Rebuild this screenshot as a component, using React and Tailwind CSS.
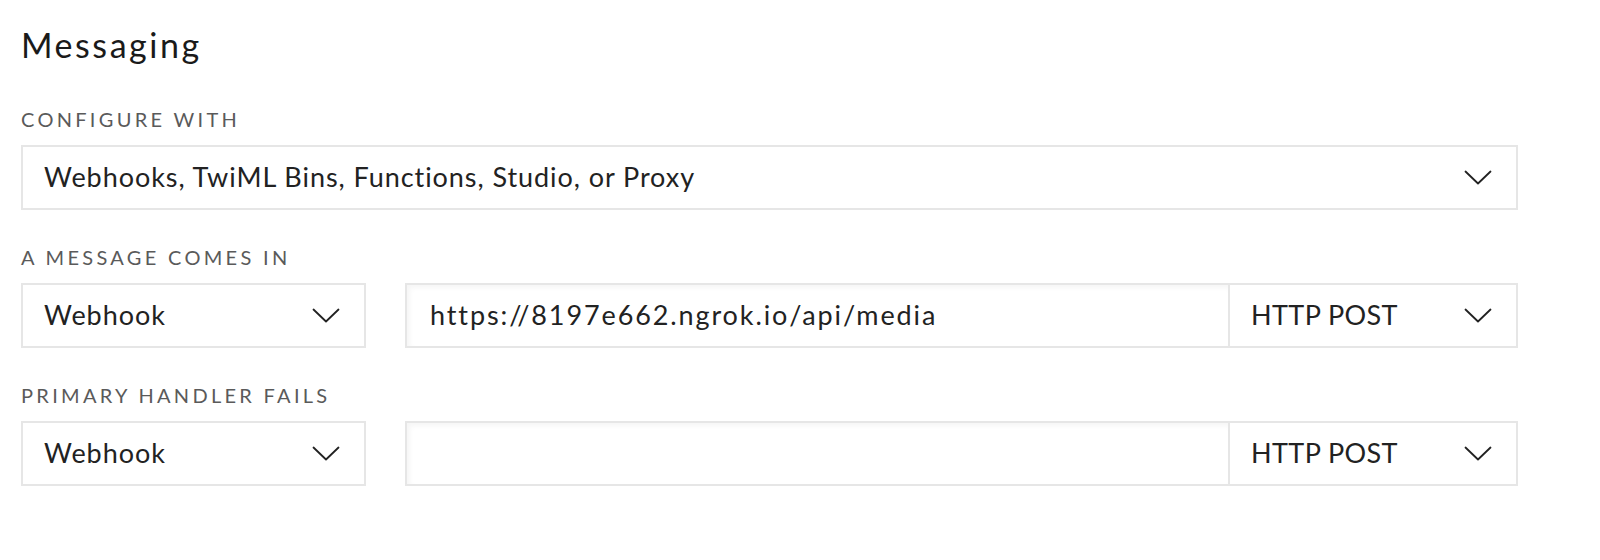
import React from 'react';

const Chevron = () => (
  <svg width="28" height="15" viewBox="0 0 28 15" fill="none" className="shrink-0">
    <path d="M1.5 1.5 L14 13.5 L26.5 1.5" stroke="#222" strokeWidth="1.8" strokeLinecap="round" strokeLinejoin="round" />
  </svg>
);

const Select = ({ value, className = '', tracking = 'tracking-[0.035em]' }) => (
  <div className={`flex items-center justify-between h-[65px] border-2 border-[#e6e6e6] bg-white pl-[21px] pr-[24px] ${className}`}>
    <span className={`text-[27px] text-[#222] ${tracking}`}>{value}</span>
    <Chevron />
  </div>
);

const Input = ({ value }) => (
  <div className="flex items-center flex-1 h-[65px] border-2 border-r-0 border-[#e6e6e6] bg-white pl-[23px] shadow-[inset_3px_3px_5px_rgba(0,0,0,0.04)]">
    <span className="text-[27px] tracking-[0.07em] text-[#222]">{value}</span>
  </div>
);

const Label = ({ children }) => (
  <div className="text-[20px] leading-[24px] tracking-[0.165em] uppercase text-[#5a5a5a]">{children}</div>
);

const HandlerRow = ({ url }) => (
  <div className="flex items-center">
    <Select value="Webhook" className="w-[345px]" />
    <div className="flex flex-1 ml-[39px]">
      <Input value={url} />
      <Select value="HTTP POST" className="w-[290px]" tracking="tracking-[0.015em]" />
    </div>
  </div>
);

export default function App() {
  return (
    <div className="w-[1600px] h-[560px] bg-white pl-[21px] pr-[82px] pt-[25px]" style={{ fontFamily: 'Lato, "Open Sans", sans-serif' }}>
      <h2 className="text-[34px] leading-[40px] tracking-[0.075em] text-[#1a1a1a]">Messaging</h2>

      <div className="mt-[42px]">
        <Label>Configure with</Label>
        <div className="mt-[14px]">
          <Select value="Webhooks, TwiML Bins, Functions, Studio, or Proxy" />
        </div>
      </div>

      <div className="mt-[35px]">
        <Label>A message comes in</Label>
        <div className="mt-[14px]">
          <HandlerRow url="https://8197e662.ngrok.io/api/media" />
        </div>
      </div>

      <div className="mt-[35px]">
        <Label>Primary handler fails</Label>
        <div className="mt-[14px]">
          <HandlerRow url="" />
        </div>
      </div>
    </div>
  );
}
